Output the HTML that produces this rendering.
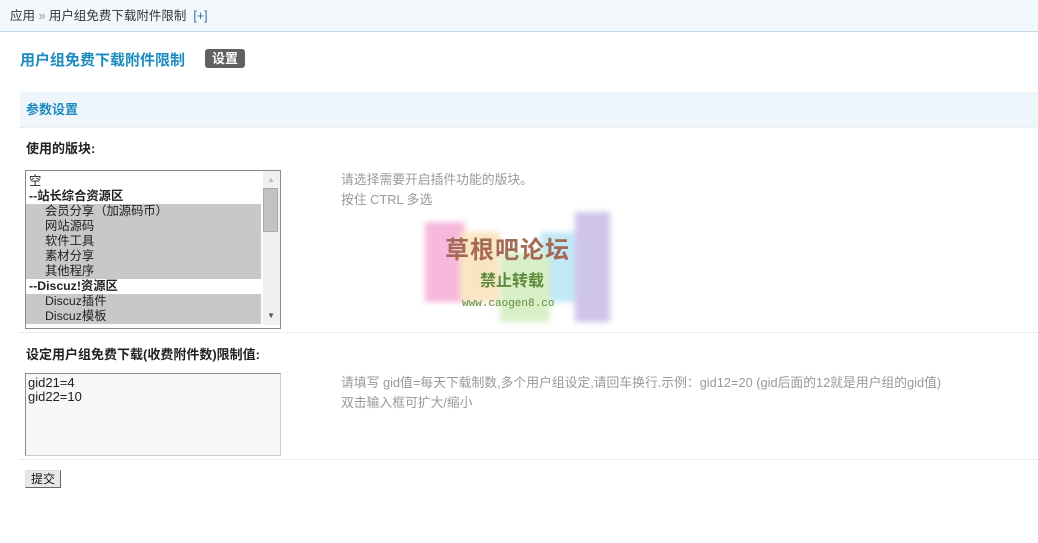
<!DOCTYPE html>
<html><head><meta charset="utf-8"><style>
body{margin:0;width:1038px;height:543px;background:#fff;font-family:"Liberation Sans","Noto Sans CJK SC",sans-serif;font-size:12px;color:#333;position:relative;overflow:hidden}
.a{position:absolute}
.crumb{left:0;top:0;width:1038px;height:31px;background:#f2f8fc;border-bottom:1px solid #c5dbe9;line-height:33px;font-size:12.5px}
.dot{position:absolute;left:20px;width:1018px;border-top:1px dotted #ddd}
.row{height:15px;line-height:15px;white-space:nowrap}
.sel{background:#c8c8c8;padding-left:19px;margin-right:19px}
.b{font-weight:bold;color:#222}
.lbl{font-size:13px}
.hint{color:#999;line-height:20px;font-size:12.8px}
</style></head><body>
<div class="a crumb"><span style="padding-left:10px">应用 <span style="color:#999">»</span> 用户组免费下载附件限制 &nbsp;<span style="color:#2f6fa5">[+]</span></span></div>
<div class="a" style="left:20px;top:49px;font-size:15px;font-weight:bold;color:#1c8bc0">用户组免费下载附件限制</div>
<div class="a" style="left:205px;top:49px;width:40px;height:19px;background:#616161;border-radius:3px;color:#fff;font-weight:bold;text-align:center;line-height:19px;font-size:13px">设置</div>
<div class="a" style="left:20px;top:92px;width:1018px;height:35px;background:#eef5fb;line-height:36px"><span style="padding-left:6px;font-weight:bold;color:#1c8bc0;font-size:13px">参数设置</span></div>
<div class="dot" style="top:127px"></div>
<div class="a b lbl" style="left:26px;top:138px">使用的版块:</div>
<div class="a" style="left:25px;top:170px;width:254px;height:154px;border:1px solid #8a8a8a;overflow:hidden;padding-top:3px;color:#222;font-size:12.3px">
<div class="row" style="padding-left:3px">空</div>
<div class="row b" style="padding-left:3px">--站长综合资源区</div>
<div class="row sel">会员分享（加源码币）</div>
<div class="row sel">网站源码</div>
<div class="row sel">软件工具</div>
<div class="row sel">素材分享</div>
<div class="row sel">其他程序</div>
<div class="row b" style="padding-left:3px">--Discuz!资源区</div>
<div class="row sel">Discuz插件</div>
<div class="row sel">Discuz模板</div>
<div class="a" style="right:0;top:0;width:17px;height:154px;background:#f0f0f0"></div>
<div class="a" style="right:2px;top:17px;width:13px;height:42px;background:#c2c2c2;border:1px solid #aaa"></div>
<div class="a" style="right:5px;top:4px;font-size:8px;color:#bbb">▲</div>
<div class="a" style="right:5px;top:140px;font-size:8px;color:#555">▼</div>
</div>
<div class="a hint" style="left:341px;top:170px">请选择需要开启插件功能的版块。<br>按住 CTRL 多选</div>
<div class="a" style="left:420px;top:212px;width:190px;height:120px;opacity:.55">
<div class="a" style="left:5px;top:10px;width:40px;height:80px;background:#f07fc0;filter:blur(3px)"></div>
<div class="a" style="left:40px;top:20px;width:40px;height:70px;background:#f6d08f;filter:blur(3px)"></div>
<div class="a" style="left:120px;top:20px;width:40px;height:70px;background:#8fd6f0;filter:blur(3px)"></div>
<div class="a" style="left:155px;top:0px;width:35px;height:110px;background:#a894d8;filter:blur(3px)"></div>
<div class="a" style="left:80px;top:40px;width:50px;height:70px;background:#b9e29a;filter:blur(3px)"></div>
</div>
<div class="a" style="left:445px;top:230px;font-size:24px;font-weight:bold;color:#a46a55;letter-spacing:1px">草根吧论坛</div>
<div class="a" style="left:480px;top:267px;font-size:16px;font-weight:bold;color:#5d8a3a">禁止转载</div>
<div class="a" style="left:462px;top:298px;font-size:11px;color:#5d8a3a;font-family:'Liberation Mono',monospace">www.caogen8.co</div>
<div class="dot" style="top:332px"></div>
<div class="a b lbl" style="left:26px;top:344px">设定用户组免费下载(收费附件数)限制值:</div>
<div class="a" style="left:25px;top:373px;width:250px;height:77px;border:1px solid #8a8a8a;border-right-color:#ccc;border-bottom-color:#ccc;background:#f7f7f7;padding:2px;line-height:14px;color:#222;font-size:13px">gid21=4<br>gid22=10</div>
<div class="a hint" style="left:341px;top:373px">请填写 gid值=每天下载制数,多个用户组设定,请回车换行.示例：gid12=20 (gid后面的12就是用户组的gid值)<br>双击输入框可扩大/缩小</div>
<div class="dot" style="top:459px"></div>
<div class="a" style="left:25px;top:470px;width:34px;height:16px;border:1px solid #666;border-top-color:#ddd;border-left-color:#ddd;background:#e8e8e8;text-align:center;line-height:17px;color:#111">提交</div>
</body></html>
